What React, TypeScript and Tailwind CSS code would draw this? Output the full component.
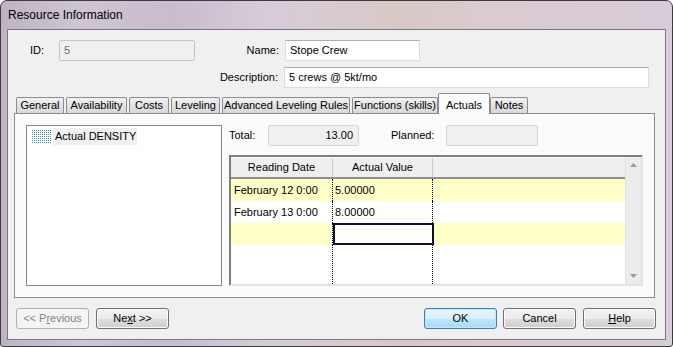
import React from 'react';

const font = { fontFamily: '"Liberation Sans", Arial, sans-serif' };

const tabs = [
  { label: 'General', w: 'w-[48px]', ml: 'ml-0' },
  { label: 'Availability', w: 'w-[61px]', ml: 'ml-[2px]' },
  { label: 'Costs', w: 'w-[40px]', ml: 'ml-[2px]' },
  { label: 'Leveling', w: 'w-[49px]', ml: 'ml-[2px]' },
  { label: 'Advanced Leveling Rules', w: 'w-[128px]', ml: 'ml-[2px]' },
  { label: 'Functions (skills)', w: 'w-[86px]', ml: 'ml-[2px]' },
  { label: 'Actuals', w: 'w-[52px]', ml: 'ml-0', active: true },
  { label: 'Notes', w: 'w-[38px]', ml: 'ml-0' },
];

const rows = [
  { date: 'February 12 0:00', value: '5.00000', bg: 'bg-[#ffffc8]' },
  { date: 'February 13 0:00', value: '8.00000', bg: 'bg-white' },
  { date: '', value: '', bg: 'bg-[#ffffc8]', focus: true },
];

const Button = ({
  children,
  className = '',
  kind = 'normal',
}: {
  children: React.ReactNode;
  className?: string;
  kind?: 'normal' | 'disabled' | 'default';
}) => {
  const look =
    kind === 'disabled'
      ? 'border-[#adb2b5] bg-[#f4f4f4] text-[#838383]'
      : kind === 'default'
      ? 'border-[#3c7fb1] bg-[linear-gradient(#eaf6fd_0%,#d9f0fc_50%,#bee6fd_51%,#a7d9f5_100%)] text-black shadow-[inset_0_0_0_1px_#c3e6fa]'
      : 'border-[#707070] bg-[linear-gradient(#f2f2f2_0%,#ebebeb_50%,#dddddd_51%,#cfcfcf_100%)] text-black shadow-[inset_0_0_0_1px_#fbfbfb]';
  return (
    <div
      className={`h-[21px] w-[73px] rounded-[3px] border flex items-center justify-center text-[11px] whitespace-nowrap ${look} ${className}`}
    >
      {children}
    </div>
  );
};

const DotIcon = () => (
  <svg width="20" height="14" viewBox="0 0 20 14" className="shrink-0">
    {Array.from({ length: 7 }).map((_, r) =>
      Array.from({ length: 10 }).map((_, c) => (
        <rect key={`${r}-${c}`} x={c * 2} y={r * 2} width="1" height="1" fill="#3c86dc" />
      ))
    )}
  </svg>
);

export default function App() {
  return (
    <div
      style={font}
      className="w-[673px] h-[347px] flex flex-col rounded-t-[7px] rounded-b-[3px] border border-[#3d3a40] px-[6px] pb-[6px] bg-[linear-gradient(90deg,#bdb3c3_0%,#cfc5d4_12%,#c8bccd_25%,#d6ccd9_40%,#d8c9c6_60%,#d9cbd0_75%,#d8ccd9_100%)] overflow-hidden"
    >
      <div className="h-[28px] flex items-center pl-[1px] text-[12px] text-black">
        Resource Information
      </div>

      <div className="flex-1 flex flex-col border border-[#7b7580] bg-[#f0f0f0] text-[11px] text-black">
        {/* name row */}
        <div className="mt-[10px] flex items-center h-[21px]">
          <span className="ml-[22px] w-[29px]">ID:</span>
          <div className="w-[136px] h-[21px] border border-[#c5c6c9] rounded-[2px] bg-[#f0f0f0] flex items-center pl-[4px] text-[#6d6d6d]">
            5
          </div>
          <span className="w-[90px] text-right pr-[6px]">Name:</span>
          <div className="w-[135px] h-[21px] border border-[#dbdde3] border-t-[#abadb3] bg-white flex items-center pl-[4px]">
            Stope Crew
          </div>
        </div>

        {/* description row */}
        <div className="mt-[6px] flex items-center h-[21px]">
          <span className="ml-[186px] w-[90px] text-right pr-[6px]">Description:</span>
          <div className="w-[365px] h-[21px] border border-[#dbdde3] border-t-[#abadb3] bg-white flex items-center pl-[4px]">
            5 crews @ 5kt/mo
          </div>
        </div>

        {/* tabs */}
        <div className="mt-[5px] flex items-end h-[20px] pl-[8px] relative z-10">
          {tabs.map((t) =>
            t.active ? (
              <div
                key={t.label}
                className={`${t.w} ${t.ml} h-[21px] -mb-[1px] border border-b-0 border-[#898c95] bg-[#fbfbfb] flex items-start justify-center pt-[3px] rounded-t-[2px] whitespace-nowrap`}
              >
                {t.label}
              </div>
            ) : (
              <div
                key={t.label}
                className={`${t.w} ${t.ml} h-[16px] border border-b-0 border-[#898c95] bg-[linear-gradient(#f2f2f2,#e3e3e3_50%,#d9d9d9)] flex items-center justify-center rounded-t-[2px] whitespace-nowrap`}
              >
                {t.label}
              </div>
            )
          )}
        </div>

        {/* tab panel */}
        <div className="ml-[6px] w-[641px] h-[185px] border border-[#898c95] bg-[#fbfbfb] flex pt-[11px] pl-[11px]">
          <div className="w-[196px] h-[161px] border border-[#828790] bg-white pl-[5px] pt-[2px]">
            <div className="flex items-center h-[17px]">
              <DotIcon />
              <span className="ml-[1px] h-[17px] w-[84px] bg-[#f0f0f0] flex items-center pl-[2px] whitespace-nowrap">
                Actual DENSITY
              </span>
            </div>
          </div>

          <div className="ml-[7px] flex flex-col">
            <div className="flex items-center h-[21px]">
              <span className="w-[39px]">Total:</span>
              <div className="w-[91px] h-[21px] border border-[#d5d6d9] rounded-[2px] bg-[#f0f0f0] flex items-center justify-end pr-[5px]">
                13.00
              </div>
              <span className="ml-[32px] w-[55px]">Planned:</span>
              <div className="w-[92px] h-[21px] border border-[#d5d6d9] rounded-[2px] bg-[#f0f0f0]" />
            </div>

            {/* grid */}
            <div className="mt-[9px] w-[414px] h-[131px] flex border-2 border-t-[#7e7e7e] border-l-[#7e7e7e] border-r-[#e3e3e3] border-b-[#e3e3e3]">
              <div className="flex-1 flex flex-col bg-white">
                <div className="h-[22px] flex bg-[#efefef] border-b-2 border-[#8f8f8f] border-t border-t-[#ffffff]">
                  <div className="w-[102px] flex items-center justify-center border-r border-[#c9c9c9]">
                    Reading Date
                  </div>
                  <div className="w-[100px] flex items-center justify-center border-r border-[#c9c9c9]">
                    Actual Value
                  </div>
                  <div className="flex-1" />
                </div>
                {rows.map((r, i) => (
                  <div key={i} className={`h-[22px] flex ${r.bg}`}>
                    <div className="w-[102px] flex items-center pl-[3px] border-r border-dotted border-black whitespace-nowrap">
                      {r.date}
                    </div>
                    {r.focus ? (
                      <div className="w-[101px] -mr-[1px] border-2 border-[#0c0c3c] bg-white" />
                    ) : (
                      <div className="w-[100px] flex items-center pl-[2px] border-r border-dotted border-black">
                        {r.value}
                      </div>
                    )}
                    <div className="flex-1" />
                  </div>
                ))}
                <div className="flex-1 flex">
                  <div className="w-[102px] border-r border-dotted border-black" />
                  <div className="w-[100px] border-r border-dotted border-black" />
                  <div className="flex-1" />
                </div>
              </div>
              <div className="w-[16px] bg-[#ececec] border-l border-[#e0e0e0] flex flex-col items-center justify-between py-[6px]">
                <svg width="7" height="4" viewBox="0 0 7 4">
                  <path d="M0 4 L3.5 0 L7 4 Z" fill="#9a9a9a" />
                </svg>
                <svg width="7" height="4" viewBox="0 0 7 4">
                  <path d="M0 0 L3.5 4 L7 0 Z" fill="#9a9a9a" />
                </svg>
              </div>
            </div>
          </div>
        </div>

        {/* buttons */}
        <div className="mt-[10px] flex">
          <Button kind="disabled" className="ml-[8px] w-[72px]">
            &lt;&lt; P<span className="underline">r</span>evious
          </Button>
          <Button className="ml-[7px]">
            Ne<span className="underline">x</span>t &gt;&gt;
          </Button>
          <Button kind="default" className="ml-[255px]">
            OK
          </Button>
          <Button className="ml-[6px]">Cancel</Button>
          <Button className="ml-[7px]">
            <span className="underline">H</span>elp
          </Button>
        </div>
      </div>
    </div>
  );
}
